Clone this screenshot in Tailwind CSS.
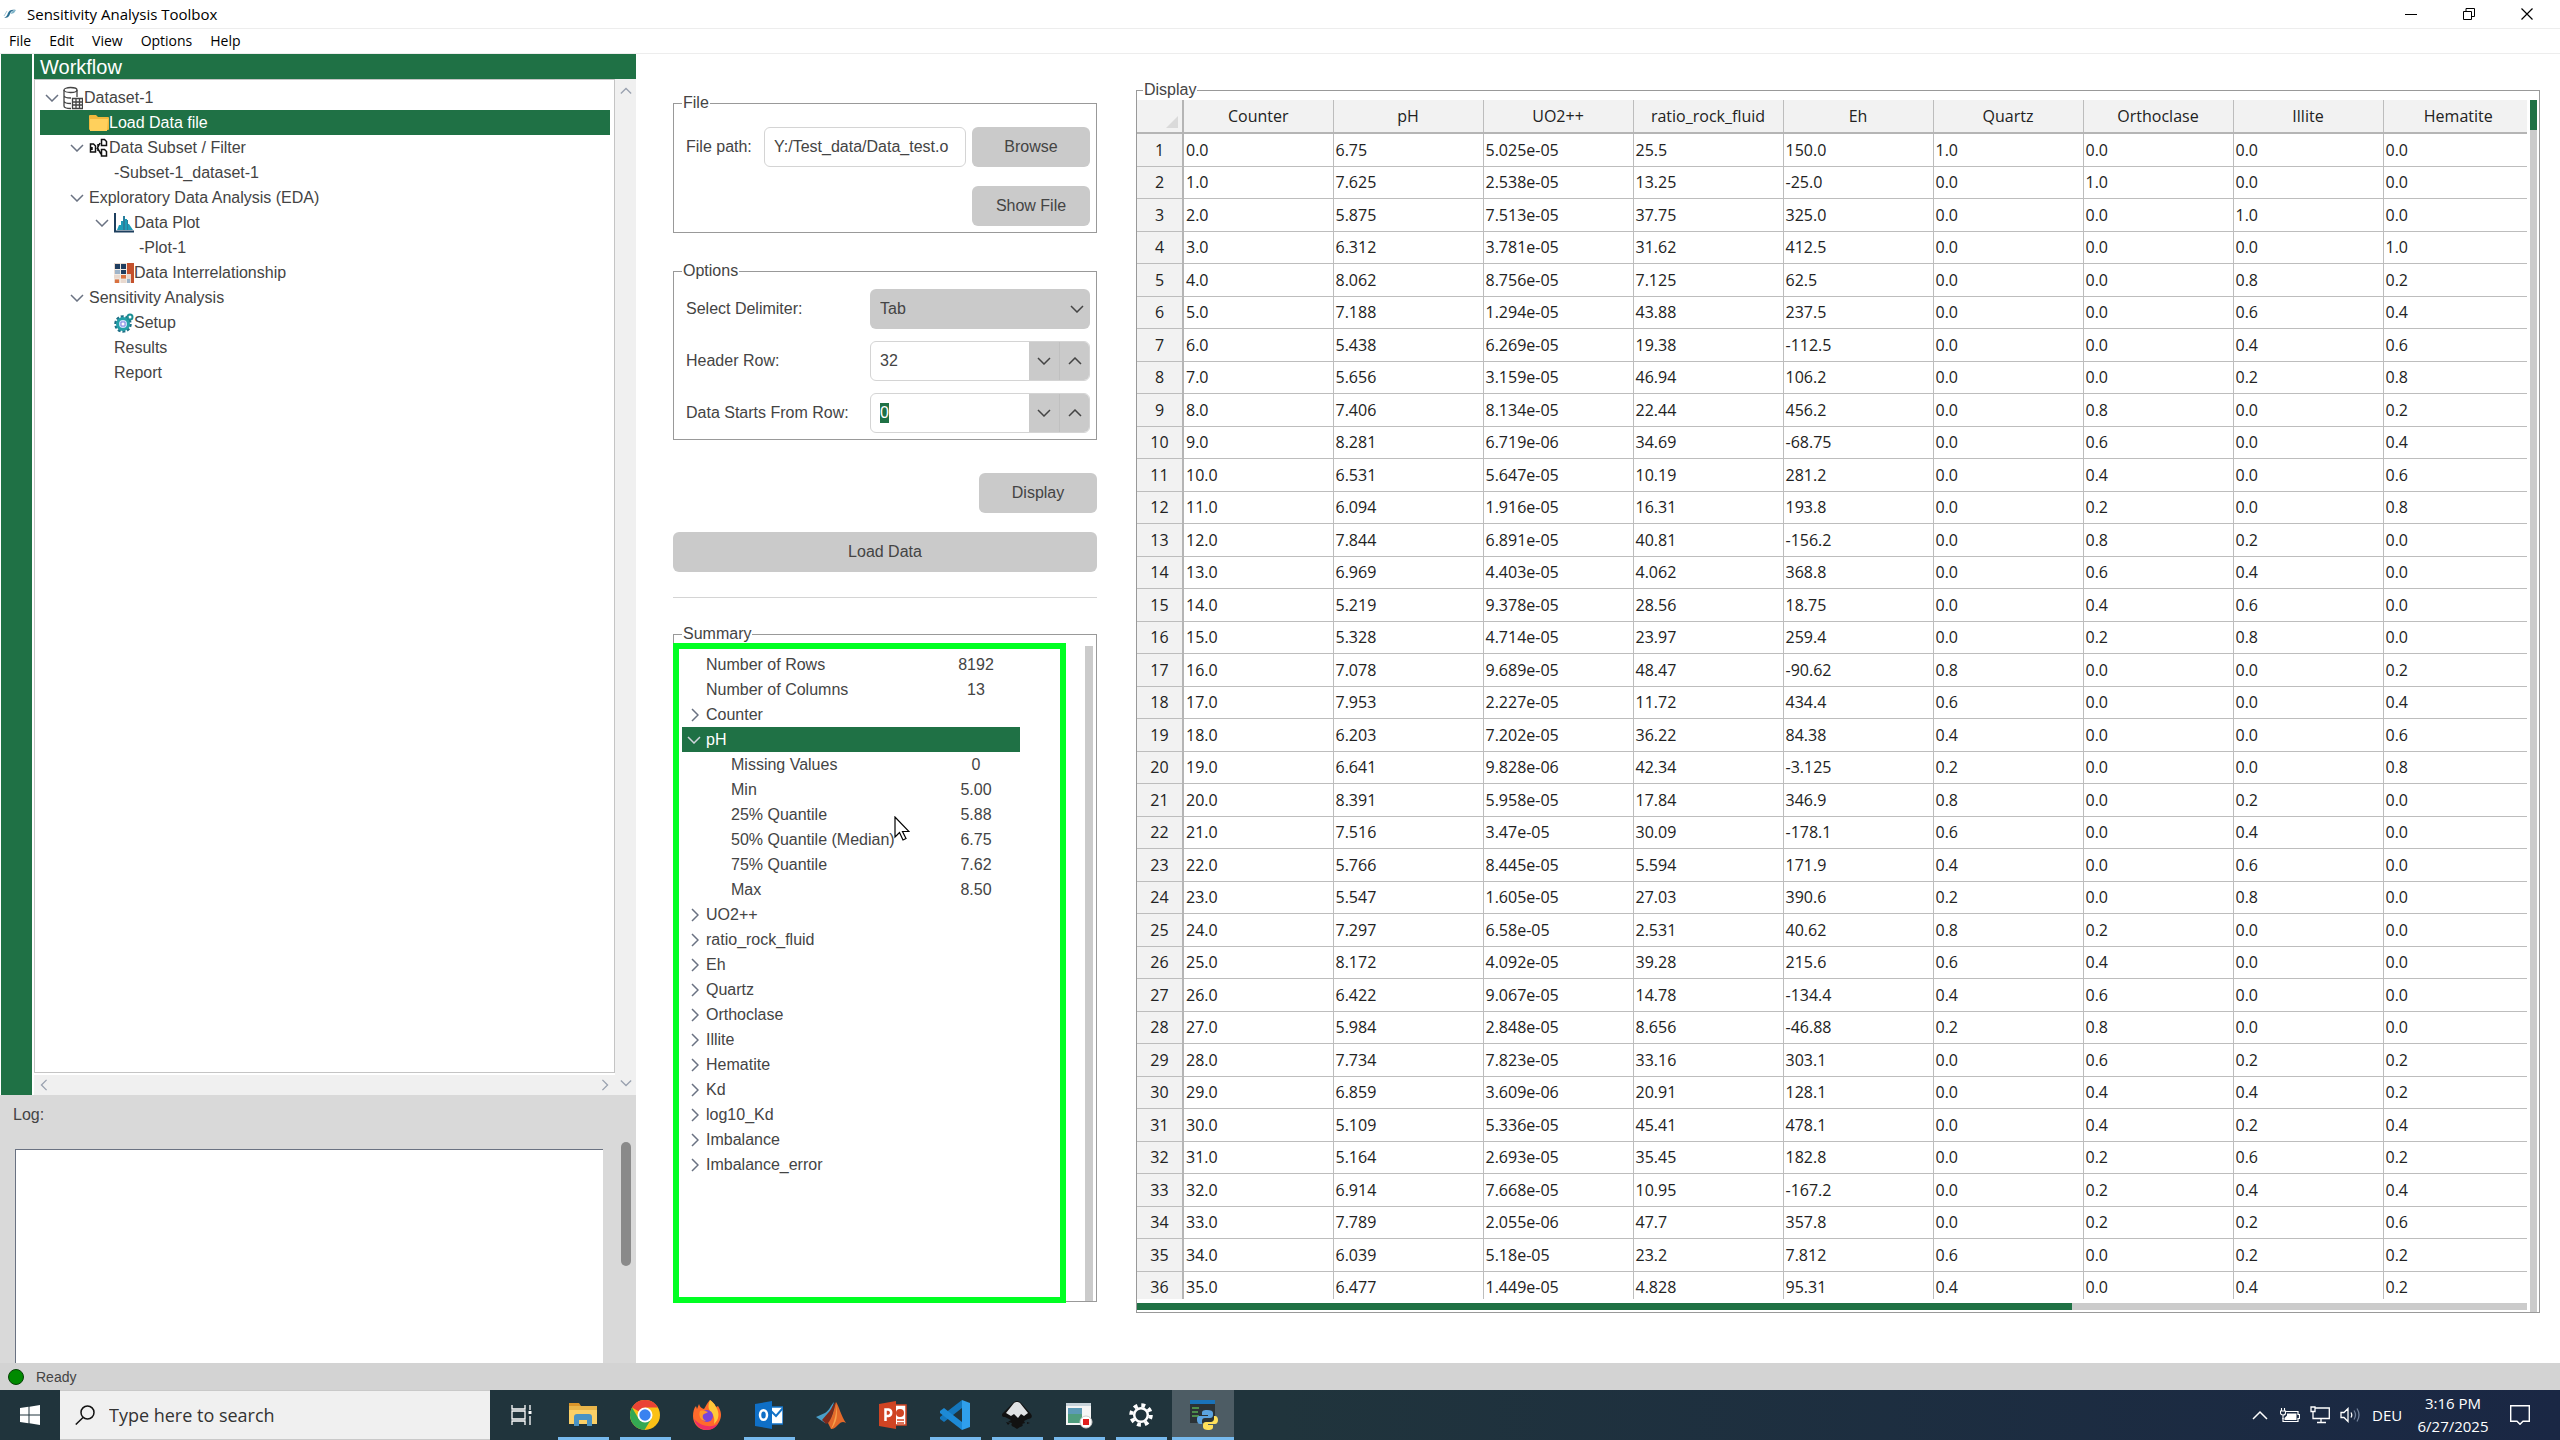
<!DOCTYPE html>
<html lang="en">
<head>
    <meta charset="UTF-8">
    <meta name="viewport" content="width=device-width, initial-scale=1.0">
    <title>Sensitivity Analysis Toolbox</title>
    <script src="https://cdn.jsdelivr.net/npm/@tailwindcss/browser@4"></script>
</head>
<body class="h-screen flex flex-col overflow-hidden bg-white text-base leading-5 text-[#444] font-['Liberation_Sans',Arial,sans-serif]">

    <!-- shared symbols -->
    <svg class="hidden">
        <symbol id="down" viewBox="0 0 14 8"><path d="M1 1l6 6 6-6" fill="none" stroke="currentColor" stroke-width="1.5"/></symbol>
        <symbol id="up" viewBox="0 0 14 8"><path d="M1 7l6-6 6 6" fill="none" stroke="currentColor" stroke-width="1.5"/></symbol>
        <symbol id="right" viewBox="0 0 8 14"><path d="M1 1l6 6-6 6" fill="none" stroke="currentColor" stroke-width="1.5"/></symbol>
        <symbol id="left" viewBox="0 0 8 14"><path d="M7 1L1 7l6 6" fill="none" stroke="currentColor" stroke-width="1.5"/></symbol>
    </svg>

    <!-- title bar -->
    <header class="h-7 shrink-0 flex items-center text-[15px] text-black font-['Open_Sans',sans-serif]">
        <svg class="w-4 h-4 ml-[3px] mr-2" viewBox="0 0 16 16"><path d="M1 12c2-1 3-2 4-5s4-4 8-3c-3 0-5 1-6 4s-3 4-6 4z" fill="#2b6f92"/><path d="M8 8c0-2 2-4 5-4l-2 3z" fill="#7fb4c9"/><path d="M1 10l3-5" stroke="#a9c9d6"/></svg>
        <h1 class="flex-1">Sensitivity Analysis Toolbox</h1>
        <button aria-label="Minimize" class="w-[58px] h-full flex items-center justify-center"><svg class="w-3 h-3" viewBox="0 0 12 12"><path d="M0 6.5h12" stroke="#000"/></svg></button>
        <button aria-label="Restore" class="w-[58px] h-full flex items-center justify-center"><svg class="w-3 h-3" viewBox="0 0 12 12"><path d="M.5 3.500h8v8h-8zM3 3V.5h8.500v8H9" fill="none" stroke="#000"/></svg></button>
        <button aria-label="Close" class="w-[58px] h-full mr-1 flex items-center justify-center"><svg class="w-3 h-3" viewBox="0 0 12 12"><path d="M.5.5l11 11M11.500.5l-11 11" stroke="#000" stroke-width="1.200"/></svg></button>
    </header>
    <nav class="h-[26px] shrink-0 flex items-center gap-[18px] px-[9px] border-y border-[#ededed] text-sm text-black font-['Open_Sans',sans-serif]">
        <a href="#">File</a>
        <a href="#">Edit</a>
        <a href="#">View</a>
        <a href="#">Options</a>
        <a href="#">Help</a>
    </nav>

    <main class="flex-1 min-h-0 flex">

        <!-- workflow + log -->
        <aside class="w-[636px] shrink-0 flex flex-col">
            <div class="flex-1 min-h-0 flex pl-px gap-0.5">
                <div class="w-[31px] bg-[#1f7145]"></div>
                <div class="flex-1 flex flex-col">
                    <h2 class="h-[25px] bg-[#1f7145] text-white text-xl leading-[26px] pl-1.5">Workflow</h2>
                    <div class="flex-1 flex">
                        <div class="flex-1 flex flex-col">
                            <ul class="flex-1 border border-[#c4c4c4] pl-[5px] pr-1 pt-[5px]">
                                <li class="h-[25px] flex items-center">
                                    <svg class="w-3.5 h-2 mx-[5px] text-gray-500"><use href="#down"/></svg>
                                    <svg class="w-5 h-6 -ml-px mr-px" viewBox="0 0 20 24"><g fill="none" stroke="#444" stroke-width="1.300"><ellipse cx="7.500" cy="4" rx="6.500" ry="2.500"/><path d="M1 4v16c0 1.500 2 2.500 7 2.500M14 4v7M1 9.500c0 1.500 2 2.500 7 2.500M1 15c0 1.500 2 2.500 7 2.500"/><path d="M9.500 12.500h10v10h-10zM9.500 16h10M9.500 19h10M13 12.500v10M16.500 12.500v10"/></g></svg>
                                    Dataset-1
                                </li>
                                <li class="h-[25px] flex items-center pl-[49px] bg-[#1f7145] text-white">
                                    <svg class="w-5 h-5" viewBox="0 0 20 20"><path d="M0 3q0-1 1-1h6l2 2h10q1 0 1 1v11q0 1-1 1H1q-1 0-1-1z" fill="#f0b83c"/><path d="M1 6h18l-1 12H1z" fill="#ffd05c"/></svg>
                                    Load Data file
                                </li>
                                <li class="h-[25px] flex items-center pl-[25px]">
                                    <svg class="w-3.5 h-2 mx-[5px] text-gray-500"><use href="#down"/></svg>
                                    <svg class="w-5 h-5" viewBox="0 0 20 20"><g fill="none" stroke="#111" stroke-width="1.500"><path d="M1.500 6h3l2 2v6h-5zM3 9v3M8 11l3-6M8 11h1l3 5M9 6v7M12.500 1.500h3l2 2v4h-5zM12.500 11.500h3l2 2v4.500h-5z"/></g></svg>
                                    Data Subset / Filter
                                </li>
                                <li class="h-[25px] flex items-center pl-[74px]">-Subset-1_dataset-1</li>
                                <li class="h-[25px] flex items-center pl-[25px]">
                                    <svg class="w-3.5 h-2 mx-[5px] text-gray-500"><use href="#down"/></svg>
                                    Exploratory Data Analysis (EDA)
                                </li>
                                <li class="h-[25px] flex items-center pl-[50px]">
                                    <svg class="w-3.5 h-2 mx-[5px] text-gray-500"><use href="#down"/></svg>
                                    <svg class="w-5 h-5" viewBox="0 0 20 20"><path d="M3 17l2-5h2V8h2V3h2v3h2v5h2l4 6z" fill="#1c9cb8"/><path d="M9 3h2v14H9zM13 7h1v10h-1z" fill="#2a7e9c"/><path d="M1 0v18.500h19" fill="none" stroke="#1d3f5e" stroke-width="2"/></svg>
                                    Data Plot
                                </li>
                                <li class="h-[25px] flex items-center pl-[99px]">-Plot-1</li>
                                <li class="h-[25px] flex items-center pl-[74px]">
                                    <svg class="w-5 h-5" viewBox="0 0 20 20"><path d="M0 0h20v20H0z" fill="#e8d9cf"/><path d="M1 1h5v5H1zM7 1h5v5H7zM7 7h5v4H7z" fill="#1f3d5f"/><path d="M13 0h7v20h-3v-9h-4z" fill="#c4512d"/><path d="M7 12h5v4H7zM1 16h4v4H1z" fill="#d9713f"/><path d="M1 7h5v4H1zM13 16h3v4h-3z" fill="#9eb4c9"/><path d="M6.500 0v20M12.500 0v20M0 6.500h12M0 11.500h12M0 16h12" stroke="#f4efe9" stroke-width=".8"/></svg>
                                    Data Interrelationship
                                </li>
                                <li class="h-[25px] flex items-center pl-[25px]">
                                    <svg class="w-3.5 h-2 mx-[5px] text-gray-500"><use href="#down"/></svg>
                                    Sensitivity Analysis
                                </li>
                                <li class="h-[25px] flex items-center pl-[74px]">
                                    <svg class="w-5 h-5" viewBox="0 0 20 20"><circle cx="9" cy="11" r="7.500" fill="none" stroke="#1f6f86" stroke-width="2.500" stroke-dasharray="2.900 1.800"/><circle cx="9" cy="11" r="5.500" fill="#cfe0fb" stroke="#23a0a8" stroke-width="3"/><path d="M7 9h4v4H7z" fill="#fff" stroke="#7b7fe0"/><circle cx="16" cy="4" r="2.500" fill="none" stroke="#1c8f94" stroke-width="2"/></svg>
                                    Setup
                                </li>
                                <li class="h-[25px] flex items-center pl-[74px]">Results</li>
                                <li class="h-[25px] flex items-center pl-[74px]">Report</li>
                            </ul>
                            <div class="h-[22px] bg-[#f0f0f0] border-t-2 border-white flex items-center justify-between px-1.5 text-gray-400">
                                <svg class="w-2 h-3"><use href="#left"/></svg>
                                <svg class="w-2 h-3"><use href="#right"/></svg>
                            </div>
                        </div>
                        <div class="w-[21px] bg-[#f0f0f0] flex flex-col items-center justify-between py-2 text-gray-400">
                            <svg class="w-3 h-2"><use href="#up"/></svg>
                            <svg class="w-3 h-2"><use href="#down"/></svg>
                        </div>
                    </div>
                </div>
            </div>
            <div class="h-[268px] flex flex-col bg-[#d9d9d9]">
                <label for="log" class="pl-[13px] pt-2.5 h-[46px]">Log:</label>
                <div class="flex-1 flex">
                    <textarea id="log" readonly class="flex-1 ml-[15px] mt-2 bg-white border-t border-l border-gray-500 resize-none"></textarea>
                    <div class="w-[33px] flex justify-end pr-[5px] pt-px"><div class="w-2.5 h-[124px] rounded-full bg-[#8a8a8a]"></div></div>
                </div>
            </div>
        </aside>

        <!-- load data form -->
        <section class="w-[424px] shrink-0 ml-[37px] pt-[39px] pb-[61px] flex flex-col">
            <fieldset class="min-w-0 border border-[#999] pl-3 pr-1.5 pb-1.5">
                <legend class="-ml-1 px-px leading-5">File</legend>
                <div class="flex items-center gap-1.5 pt-3.5">
                    <label for="path" class="w-[72px]">File path:</label>
                    <input id="path" type="text" value="Y:/Test_data/Data_test.o" class="flex-1 min-w-0 h-10 px-[9px] border border-[#d4d4d4] rounded-md">
                    <button class="w-[118px] h-10 bg-[#cacaca] rounded-md">Browse</button>
                </div>
                <div class="flex justify-end pt-[19px]">
                    <button class="w-[118px] h-10 bg-[#cacaca] rounded-md">Show File</button>
                </div>
            </fieldset>

            <fieldset class="min-w-0 mt-7 border border-[#999] pl-3 pr-1.5 pb-1.5">
                <legend class="-ml-1 px-px leading-5">Options</legend>
                <div class="flex flex-col gap-3 pt-2">
                    <div class="flex items-center">
                        <label for="delimiter" class="flex-1">Select Delimiter:</label>
                        <div class="relative w-[220px]">
                            <select id="delimiter" class="appearance-none w-full h-10 px-2.5 bg-[#cacaca] rounded-md">
                                <option>Tab</option>
                                <option>Comma</option>
                                <option>Space</option>
                            </select>
                            <svg class="absolute right-1.5 top-4 w-3.5 h-2 pointer-events-none"><use href="#down"/></svg>
                        </div>
                    </div>
                    <div class="flex items-center">
                        <label for="header" class="flex-1">Header Row:</label>
                        <div class="w-[220px] h-10 flex border border-[#d4d4d4] rounded-md overflow-hidden">
                            <input id="header" type="text" inputmode="numeric" value="32" class="flex-1 min-w-0 px-[9px] outline-none">
                            <button aria-label="Decrease header row" class="w-[30px] bg-[#cacaca] flex items-center justify-center"><svg class="w-3.5 h-2"><use href="#down"/></svg></button>
                            <button aria-label="Increase header row" class="w-[30px] bg-[#cacaca] border-l border-[#c0c0c0] flex items-center justify-center"><svg class="w-3.5 h-2"><use href="#up"/></svg></button>
                        </div>
                    </div>
                    <div class="flex items-center">
                        <label for="start" class="flex-1">Data Starts From Row:</label>
                        <div class="w-[220px] h-10 flex border border-[#d4d4d4] rounded-md overflow-hidden">
                            <input id="start" type="text" inputmode="numeric" value="0" class="flex-1 min-w-0 px-[9px] outline-none selection:bg-[#1f7145] selection:text-white">
                            <button aria-label="Decrease start row" class="w-[30px] bg-[#cacaca] flex items-center justify-center"><svg class="w-3.5 h-2"><use href="#down"/></svg></button>
                            <button aria-label="Increase start row" class="w-[30px] bg-[#cacaca] border-l border-[#c0c0c0] flex items-center justify-center"><svg class="w-3.5 h-2"><use href="#up"/></svg></button>
                        </div>
                    </div>
                </div>
            </fieldset>

            <button class="self-end w-[118px] h-10 mt-[33px] shrink-0 bg-[#cacaca] rounded-md">Display</button>
            <button class="h-10 mt-[19px] shrink-0 bg-[#cacaca] rounded-md">Load Data</button>
            <hr class="mt-[25px] border-[#d4d4d4]">

            <div class="relative flex-1 min-h-0 mt-[26px] flex">
                <fieldset class="flex-1 border border-[#999]">
                    <legend class="ml-2 px-px leading-5">Summary</legend>
                    <div class="h-full flex justify-between pl-2 pr-[3px] pt-0.5">
                        <ul id="summary" class="w-[338px] pt-1.5"></ul>
                        <div class="w-2 bg-[#cbcbcb]"></div>
                    </div>
                </fieldset>
                <!-- highlight frame and pointer over the summary -->
                <div class="absolute left-0 right-[31px] top-[19px] -bottom-px border-6 border-[#00ff22]"></div>
                <svg class="absolute left-[221px] top-[192px] w-4 h-[25px]" viewBox="0 0 16 25"><path d="M1 1v20l4.500-4.500L9 24l3-1.500-3.500-7H15z" fill="#fff" stroke="#000" stroke-width="1.200"/></svg>
            </div>
        </section>

        <!-- data table -->
        <section class="flex-1 min-w-0 pl-[39px] pr-5 pt-[26px] pb-[50px] flex">
            <fieldset class="flex-1 min-w-0 border border-[#999]">
                <legend class="ml-1.5 px-px leading-5">Display</legend>
                <div class="h-full flex justify-between">
                    <div class="flex-1 min-w-0 flex flex-col pb-0.5">
                        <div class="flex-1 min-h-0 overflow-hidden">
                            <table class="table-fixed w-[1396px] border-collapse text-[#222] font-['Open_Sans',sans-serif]">
                                <thead>
                                    <tr class="h-[33px] bg-[#f2f2f2] border-b-2 border-[#b5b5b5]">
                                        <th class="w-[46px] border-r-2 border-[#b5b5b5] align-bottom"><svg class="w-3 h-3 ml-auto mr-1 mb-1" viewBox="0 0 12 12"><path d="M12 0v12H0z" fill="#dadada"/></svg></th>
                                        <th class="w-[150px] border-r border-[#bdbdbd] font-normal">Counter</th>
                                        <th class="w-[150px] border-r border-[#bdbdbd] font-normal">pH</th>
                                        <th class="w-[150px] border-r border-[#bdbdbd] font-normal">UO2++</th>
                                        <th class="w-[150px] border-r border-[#bdbdbd] font-normal">ratio_rock_fluid</th>
                                        <th class="w-[150px] border-r border-[#bdbdbd] font-normal">Eh</th>
                                        <th class="w-[150px] border-r border-[#bdbdbd] font-normal">Quartz</th>
                                        <th class="w-[150px] border-r border-[#bdbdbd] font-normal">Orthoclase</th>
                                        <th class="w-[150px] border-r border-[#bdbdbd] font-normal">Illite</th>
                                        <th class="w-[150px] font-normal">Hematite</th>
                                    </tr>
                                </thead>
                                <tbody id="rows"></tbody>
                            </table>
                        </div>
                        <div class="h-[7px] mt-1 bg-[#cbcbcb]"><div class="w-[67.3%] h-full bg-[#1f7145]"></div></div>
                    </div>
                    <div class="w-[7px] ml-[3px] mr-0.5 bg-[#cbcbcb]"><div class="h-[30px] bg-[#1f7145]"></div></div>
                </div>
            </fieldset>
        </section>
    </main>

    <!-- status bar -->
    <div class="h-[27px] shrink-0 bg-[#d3d3d3] flex items-center gap-3 pl-2 text-sm">
        <span class="w-4 h-4 rounded-full bg-[#008a00] border border-[#063f06]"></span>
        Ready
    </div>

    <!-- taskbar -->
    <footer class="h-[50px] shrink-0 flex items-stretch bg-linear-to-r from-[#20343c] via-[#20343c] to-[#1a2744] text-white font-['Open_Sans',sans-serif]">
        <button aria-label="Start" class="w-[60px] flex items-center justify-center"><svg class="w-5 h-5" viewBox="0 0 20 20"><path d="M0 3l8.500-1.200v7.700H0zM9.500 1.700L20 0v9.500H9.500zM0 10.500h8.500v7.700L0 17zM9.500 10.500H20V20L9.500 18.300z" fill="#fff"/></svg></button>
        <label class="w-[430px] flex items-center gap-[14px] pl-[15px] bg-[#f0f0f0] border-y border-[#c9c9c9] text-[#222]">
            <svg class="w-5 h-5" viewBox="0 0 20 20"><circle cx="12.500" cy="7.500" r="6.500" fill="none" stroke="#111" stroke-width="1.500"/><path d="M8 12.500L.8 19.500" stroke="#111" stroke-width="1.500"/></svg>
            <input type="text" aria-label="Search" placeholder="Type here to search" class="flex-1 min-w-0 text-lg placeholder:text-[#333] outline-none">
        </label>
        <button aria-label="Task View" class="w-[62px] flex items-center justify-center"><svg class="w-6 h-6" viewBox="0 0 24 24"><path d="M3 2v4h13V2M3 22v-4h13v4M3 8h13v8H3zM21 2v5M21 13v9" fill="none" stroke="#fff" stroke-width="1.300"/><path d="M19.500 8h3v3h-3z" fill="#fff"/></svg></button>
        <button aria-label="File Explorer" class="w-[62px] flex flex-col items-center justify-between pt-[11px]"><svg class="w-7 h-7" viewBox="0 0 28 28"><path d="M0 2h10l2 3H0z" fill="#d9952b"/><path d="M0 5h28v18H0z" fill="#fbd067"/><path d="M0 5h28v4H0z" fill="#e9b54a"/><path d="M5 25v-9q0-3 3-3h12q3 0 3 3v9h-5v-6h-8v6z" fill="#4a93c4"/></svg><span class="w-[51px] h-[3px] bg-[#76b9ed]"></span></button>
        <button aria-label="Chrome" class="w-[62px] flex flex-col items-center justify-between pt-2.5"><svg class="w-[30px] h-[30px]" viewBox="0 0 30 30"><circle cx="15" cy="15" r="15" fill="#fbc116"/><path d="M15 15L2 7.500A15 15 0 0 1 28 7.500H15z" fill="#ea4335"/><path d="M2 7.500A15 15 0 0 0 14.500 30L21.500 18.500 15 15 8.500 18.500z" fill="#34a853"/><circle cx="15" cy="15" r="7.500" fill="#fff"/><circle cx="15" cy="15" r="5.700" fill="#3a82f0"/></svg><span class="w-[51px] h-[3px] bg-[#76b9ed]"></span></button>
        <button aria-label="Firefox" class="w-[62px] flex items-center justify-center"><svg class="w-[30px] h-[30px]" viewBox="0 0 30 30"><path d="M18 0c5 4 5 5 6 7l2-1c3 5 4 9 2 14s-7 10-14 10S1 24 1 16c0-4 1-8 3-10l1 3 2-5c1 3 2 4 5 5 2-3 3-6 6-9z" fill="#ff6a2b"/><path d="M18 0c5 4 5 5 6 7 4 6 3 13-2 17 1-5 0-9-4-13-2-3-2-6 0-11z" fill="#ffc93a"/><path d="M2 19c2 7 7 11 13 11 5 0 9-3 11-6-5 3-16 4-24-5z" fill="#ee2f66"/><circle cx="15" cy="16" r="6" fill="#7a45d8"/><path d="M8 11c3-1 5 0 8 1-2 2-4 1-5 3-1 3 1 5 3 6-5 0-8-5-6-10z" fill="#ff9a2b"/></svg></button>
        <button aria-label="Outlook" class="w-[62px] flex flex-col items-center justify-between pt-[11px]"><svg class="w-7 h-7" viewBox="0 0 28 28"><path d="M14 6h14v17H14z" fill="#fff" stroke="#1373c8" stroke-width="1.500"/><path d="M15 9l6 6 7-8" fill="none" stroke="#1373c8" stroke-width="2"/><path d="M0 3l17-3v28L0 25z" fill="#0f6fc6"/><ellipse cx="8.500" cy="14" rx="3.500" ry="4.800" fill="none" stroke="#fff" stroke-width="2.500"/></svg><span class="w-[51px] h-[3px] bg-[#76b9ed]"></span></button>
        <button aria-label="MATLAB" class="w-[62px] flex items-center justify-center"><svg class="w-[30px] h-7" viewBox="0 0 30 28"><path d="M0 16l9-4c4-2 6-8 9-11l-5 18-4 3z" fill="#4a9fc9"/><path d="M6 19l6-7c3-2 4-8 8-11l-6 20-4 2z" fill="#7d2a1c"/><path d="M20 1c3 4 5 14 10 21-3-2-5-1-7 1-3 3-5 5-8 5l-3-6c4-4 6-14 8-21z" fill="#e3692a"/><path d="M20 1c1 6 0 16-5 27 6-6 7-14 5-27z" fill="#f6a04a"/></svg></button>
        <button aria-label="PowerPoint" class="w-[62px] flex items-center justify-center"><svg class="w-7 h-7" viewBox="0 0 28 28"><path d="M15 4h12v20H15z" fill="#fff" stroke="#d04423" stroke-width="1.500"/><path d="M18 19h7M18 22h7" stroke="#d04423" stroke-width="1.500"/><circle cx="21" cy="12" r="4" fill="#d04423"/><path d="M0 3l17-3v28L0 25z" fill="#d04423"/><path d="M6.500 20V8.500h3a3.300 3.300 0 0 1 0 6.500h-3" fill="none" stroke="#fff" stroke-width="2.500"/></svg></button>
        <button aria-label="Visual Studio Code" class="w-[62px] flex flex-col items-center justify-between pt-2.5"><svg class="w-[30px] h-[30px]" viewBox="0 0 30 30"><path d="M22 0l8 3v24l-8 3z" fill="#2f9fec"/><path d="M22 0v8L4 22l-4-3v-2z" fill="#1477bd"/><path d="M22 30v-8L4 8l-4 3v2z" fill="#1d8ad6"/></svg><span class="w-[51px] h-[3px] bg-[#76b9ed]"></span></button>
        <button aria-label="Inkscape" class="w-[62px] flex flex-col items-center justify-between pt-2.5"><svg class="w-[30px] h-[30px]" viewBox="0 0 30 30"><path d="M15 1c2 0 3 1 4 2l10 11c2 3 0 5-3 5l-4 2 1 2-3 1c2 1 0 3-2 3l-3 2-3-2c-3-1-3-2-2-4l-4-1 3-2-6-3c-3 0-4-2-2-4L11 3c1-1 2-2 4-2z" fill="#111"/><path d="M15 2c1 0 2 0 3 1l8 10-4 3-3-2-3 4-4-4-3 2-5-3 8-10c1-1 2-1 3-1z" fill="#dfe2e4"/><path d="M4 22l4 1-2 2z M25 22l3 1-3 1z" fill="#111"/></svg><span class="w-[51px] h-[3px] bg-[#76b9ed]"></span></button>
        <button aria-label="Screen Recorder" class="w-[62px] flex flex-col items-center justify-between pt-[11px]"><svg class="w-7 h-7" viewBox="0 0 28 28"><path d="M1 2h25v22H1z" fill="#f5f5f5"/><path d="M1 2h25v3H1z" fill="#c7d3da"/><path d="M3 7h14v15H3z" fill="#4f9d7d"/><path d="M3 7h14v6H3z" fill="#5c9ab5"/><circle cx="21" cy="21" r="6" fill="#fff" stroke="#ccc"/><path d="M18 18h6v6h-6z" fill="#e01e1e"/></svg><span class="w-[51px] h-[3px] bg-[#76b9ed]"></span></button>
        <button aria-label="Settings" class="w-[62px] flex flex-col items-center justify-between pt-[13px]"><svg class="w-6 h-6" viewBox="0 0 24 24"><circle cx="12" cy="12" r="6.800" fill="none" stroke="#fff" stroke-width="2.500"/><circle cx="12" cy="12" r="9.800" fill="none" stroke="#fff" stroke-width="4" stroke-dasharray="3.850 3.850"/></svg><span class="w-[51px] h-[3px] bg-[#76b9ed]"></span></button>
        <button aria-label="Python" class="w-[62px] flex flex-col items-center justify-between pt-2.5 bg-[#4d5c64]"><svg class="w-[30px] h-[30px]" viewBox="0 0 30 30"><path d="M2 0h25v23H2z" fill="#2b3236"/><path d="M2 0h25v4H2z" fill="#1a72b8"/><path d="M4 8h7M4 12h6M4 16h7" stroke="#4d8c4b" stroke-width="2"/><path d="M19 10c-4 0-5 1-5 3v2h6v1h-8c-3 0-3 2-3 4s1 4 3 4h2v-3c0-2 1-3 3-3h5c2 0 3-1 3-3v-2c0-2-2-3-6-3z" fill="#5ba3e0"/><path d="M20 30c4 0 5-1 5-3v-2h-5v-1h7c2 0 3-2 3-4s-1-4-3-4h-1v3c0 2-2 3-3 3h-5c-2 0-3 1-3 3v2c0 2 2 3 5 3z" fill="#ffe05a"/></svg><span class="w-full h-[3px] bg-[#76b9ed]"></span></button>

        <div class="ml-auto flex items-center">
            <button aria-label="Show hidden icons"><svg class="w-4 h-2.5" viewBox="0 0 16 10"><path d="M1 9l7-7 7 7" fill="none" stroke="#fff" stroke-width="1.500"/></svg></button>
            <svg class="w-5 h-4 ml-3" viewBox="0 0 20 16"><path d="M6 4.500h12v3h1.500v4H18v3H3V11" fill="none" stroke="#fff" stroke-width="1.200"/><path d="M7 6.500h9.500V13h-12v-2L7 8.500z" fill="#fff"/><path d="M1.500 1v2.500M4.500 1v2.500M.5 4h5v2q0 2-2.500 2T.5 6zM3 8v4" fill="none" stroke="#fff" stroke-width="1.100"/></svg>
            <svg class="w-5 h-[18px] ml-2.5" viewBox="0 0 20 18"><path d="M5 2h14.300v10.500H3V6M11 12.500V17M7 16.500h9M1 1h4v4.500H1z" fill="none" stroke="#fff" stroke-width="1.300"/></svg>
            <svg class="w-5 h-4 ml-2.5" viewBox="0 0 20 16"><path d="M1 5.500h3l4-4v13l-4-4H1zM11 5.500q1.500 2.500 0 5" fill="none" stroke="#fff" stroke-width="1.300"/><path d="M14 3.500q3 4.500 0 9M17 1.500q4 6.500 0 13" fill="none" stroke="#71809a" stroke-width="1.300"/></svg>
            <span class="ml-3 w-[30px] text-[15px]">DEU</span>
            <div class="ml-4 w-[70px] text-center text-[15px] leading-[23px] whitespace-nowrap flex flex-col items-center"><span>3:16 PM</span><span>6/27/2025</span></div>
            <button aria-label="Notifications" class="ml-[22px] mr-[30px]"><svg class="w-5 h-5" viewBox="0 0 20 20"><path d="M.7.7h18.600v15.600H13l-3 3-3-3H.7z" fill="none" stroke="#fff" stroke-width="1.400"/></svg></button>
        </div>
    </footer>

    <script>
        // pH, UO2++, ratio_rock_fluid, Eh, Quartz, Orthoclase, Illite, Hematite
        const data = `6.75 5.025e-05 25.5 150.0 1.0 0.0 0.0 0.0
7.625 2.538e-05 13.25 -25.0 0.0 1.0 0.0 0.0
5.875 7.513e-05 37.75 325.0 0.0 0.0 1.0 0.0
6.312 3.781e-05 31.62 412.5 0.0 0.0 0.0 1.0
8.062 8.756e-05 7.125 62.5 0.0 0.0 0.8 0.2
7.188 1.294e-05 43.88 237.5 0.0 0.0 0.6 0.4
5.438 6.269e-05 19.38 -112.5 0.0 0.0 0.4 0.6
5.656 3.159e-05 46.94 106.2 0.0 0.0 0.2 0.8
7.406 8.134e-05 22.44 456.2 0.0 0.8 0.0 0.2
8.281 6.719e-06 34.69 -68.75 0.0 0.6 0.0 0.4
6.531 5.647e-05 10.19 281.2 0.0 0.4 0.0 0.6
6.094 1.916e-05 16.31 193.8 0.0 0.2 0.0 0.8
7.844 6.891e-05 40.81 -156.2 0.0 0.8 0.2 0.0
6.969 4.403e-05 4.062 368.8 0.0 0.6 0.4 0.0
5.219 9.378e-05 28.56 18.75 0.0 0.4 0.6 0.0
5.328 4.714e-05 23.97 259.4 0.0 0.2 0.8 0.0
7.078 9.689e-05 48.47 -90.62 0.8 0.0 0.0 0.2
7.953 2.227e-05 11.72 434.4 0.6 0.0 0.0 0.4
6.203 7.202e-05 36.22 84.38 0.4 0.0 0.0 0.6
6.641 9.828e-06 42.34 -3.125 0.2 0.0 0.0 0.8
8.391 5.958e-05 17.84 346.9 0.8 0.0 0.2 0.0
7.516 3.47e-05 30.09 -178.1 0.6 0.0 0.4 0.0
5.766 8.445e-05 5.594 171.9 0.4 0.0 0.6 0.0
5.547 1.605e-05 27.03 390.6 0.2 0.0 0.8 0.0
7.297 6.58e-05 2.531 40.62 0.8 0.2 0.0 0.0
8.172 4.092e-05 39.28 215.6 0.6 0.4 0.0 0.0
6.422 9.067e-05 14.78 -134.4 0.4 0.6 0.0 0.0
5.984 2.848e-05 8.656 -46.88 0.2 0.8 0.0 0.0
7.734 7.823e-05 33.16 303.1 0.0 0.6 0.2 0.2
6.859 3.609e-06 20.91 128.1 0.0 0.4 0.4 0.2
5.109 5.336e-05 45.41 478.1 0.0 0.4 0.2 0.4
5.164 2.693e-05 35.45 182.8 0.0 0.2 0.6 0.2
6.914 7.668e-05 10.95 -167.2 0.0 0.2 0.4 0.4
7.789 2.055e-06 47.7 357.8 0.0 0.2 0.2 0.6
6.039 5.18e-05 23.2 7.812 0.6 0.0 0.2 0.2
6.477 1.449e-05 4.828 95.31 0.4 0.0 0.4 0.2`.split('\n');

        document.getElementById('rows').innerHTML = data.map((line, i) => {
            const cells = [i + '.0', ...line.split(' ')];
            return `<tr class="h-8 odd:h-[33px] border-b border-[#bdbdbd]">
                <th class="bg-[#f2f2f2] border-r-2 border-[#b5b5b5] font-normal">${i + 1}</th>
                ${cells.map(c => `<td class="pl-0.5 border-r border-[#bdbdbd]">${c}</td>`).join('')}
            </tr>`;
        }).join('');

        // [name, value, kind]
        const summary = [
            ['Number of Rows', '8192', 'top'],
            ['Number of Columns', '13', 'top'],
            ['Counter', '', 'closed'],
            ['pH', '', 'open'],
            ['Missing Values', '0', 'child'],
            ['Min', '5.00', 'child'],
            ['25% Quantile', '5.88', 'child'],
            ['50% Quantile (Median)', '6.75', 'child'],
            ['75% Quantile', '7.62', 'child'],
            ['Max', '8.50', 'child'],
            ...['UO2++', 'ratio_rock_fluid', 'Eh', 'Quartz', 'Orthoclase', 'Illite', 'Hematite', 'Kd', 'log10_Kd', 'Imbalance', 'Imbalance_error'].map(n => [n, '', 'closed'])
        ];
        const kinds = {
            top: ['pl-6', ''],
            child: ['pl-[49px]', ''],
            closed: ['pl-[9px]', '<svg class="w-2 h-3.5 mr-[7px] text-gray-500"><use href="#right"/></svg>'],
            open: ['pl-[5px] bg-[#1f7145] text-white', '<svg class="w-3.5 h-2 mr-[5px] text-gray-300"><use href="#down"/></svg>']
        };
        document.getElementById('summary').innerHTML = summary.map(([name, value, kind]) =>
            `<li class="h-[25px] flex items-center ${kinds[kind][0]}">${kinds[kind][1]}<span class="flex-1">${name}</span><span class="w-[88px] text-center">${value}</span></li>`
        ).join('');

        const start = document.getElementById('start');
        start.focus();
        start.select();
    </script>
</body>
</html>
